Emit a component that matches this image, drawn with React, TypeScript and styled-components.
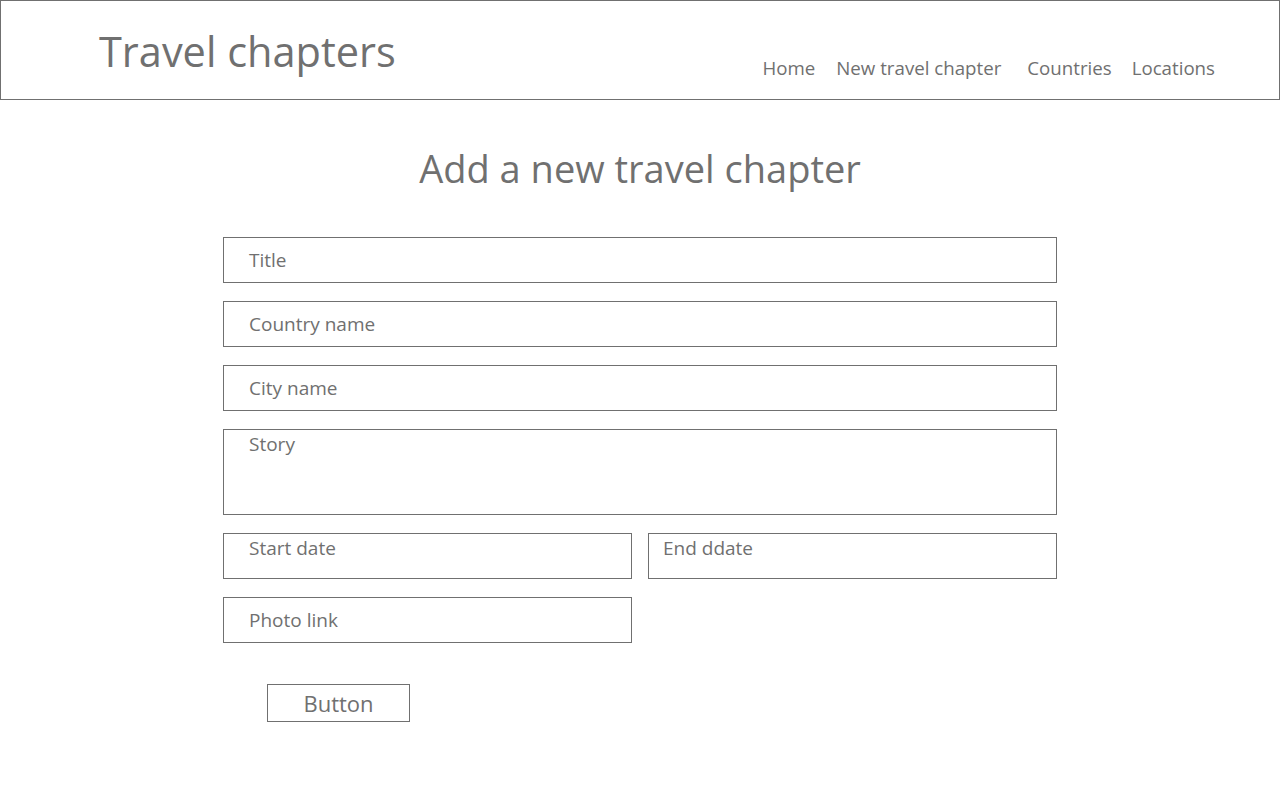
import React from 'react';
import styled, { createGlobalStyle } from 'styled-components';

const GlobalStyle = createGlobalStyle`
  body {
    margin: 0;
    background: #ffffff;
    font-family: 'Open Sans', 'Noto Sans', sans-serif;
    color: #707070;
  }
`;

const StyledHeader = styled.header`
  box-sizing: border-box;
  height: 100px;
  border: 1px solid #707070;
  display: flex;
  align-items: flex-start;
  justify-content: space-between;
  padding: 0 64px 0 98px;
`;

const StyledLogo = styled.div`
  font-size: 41.5px;
  line-height: 1;
  margin-top: 30px;
`;

const StyledNav = styled.nav`
  display: flex;
  margin-top: 55px;
`;

const StyledNavLink = styled.a<{ $gap: number }>`
  font-size: 18.7px;
  line-height: 24px;
  margin-left: ${({ $gap }) => $gap}px;
  cursor: pointer;
`;

const StyledMain = styled.main`
  width: 834px;
  margin: 0 auto;
  padding-top: 44px;
`;

const StyledHeading = styled.h1`
  margin: 0 0 45px;
  font-size: 38px;
  font-weight: 400;
  line-height: 48px;
  text-align: center;
`;

const StyledForm = styled.div`
  display: grid;
  grid-template-columns: 1fr 1fr;
  column-gap: 16px;
  row-gap: 18px;
`;

const StyledField = styled.div<{ $span?: boolean; $tall?: boolean; $top?: boolean; $pad?: number }>`
  box-sizing: border-box;
  grid-column: ${({ $span }) => ($span ? '1 / span 2' : 'auto')};
  height: ${({ $tall }) => ($tall ? 86 : 46)}px;
  border: 1px solid #707070;
  display: flex;
  align-items: ${({ $top }) => ($top ? 'flex-start' : 'center')};
  padding: ${({ $top }) => ($top ? '1px' : '0')} 0 0 ${({ $pad }) => $pad ?? 25}px;
  font-size: 19px;
  line-height: 26px;
`;

const StyledButtonRow = styled.div`
  padding: 41px 0 0 44px;
`;

const StyledButton = styled.button`
  box-sizing: border-box;
  width: 143px;
  height: 38px;
  border: 1px solid #707070;
  background: #ffffff;
  color: #707070;
  font-family: 'Open Sans', 'Noto Sans', sans-serif;
  font-size: 22px;
  line-height: 36px;
  padding: 0;
`;

export default function App() {
  return (
    <>
      <GlobalStyle />
      <StyledHeader>
        <StyledLogo>Travel chapters</StyledLogo>
        <StyledNav>
          <StyledNavLink $gap={0}>Home</StyledNavLink>
          <StyledNavLink $gap={21}>New travel chapter</StyledNavLink>
          <StyledNavLink $gap={26}>Countries</StyledNavLink>
          <StyledNavLink $gap={20}>Locations</StyledNavLink>
        </StyledNav>
      </StyledHeader>
      <StyledMain>
        <StyledHeading>Add a new travel chapter</StyledHeading>
        <StyledForm>
          <StyledField $span>Title</StyledField>
          <StyledField $span>Country name</StyledField>
          <StyledField $span>City name</StyledField>
          <StyledField $span $tall $top>Story</StyledField>
          <StyledField $top>Start date</StyledField>
          <StyledField $top $pad={14}>End ddate</StyledField>
          <StyledField>Photo link</StyledField>
        </StyledForm>
        <StyledButtonRow>
          <StyledButton>Button</StyledButton>
        </StyledButtonRow>
      </StyledMain>
    </>
  );
}
